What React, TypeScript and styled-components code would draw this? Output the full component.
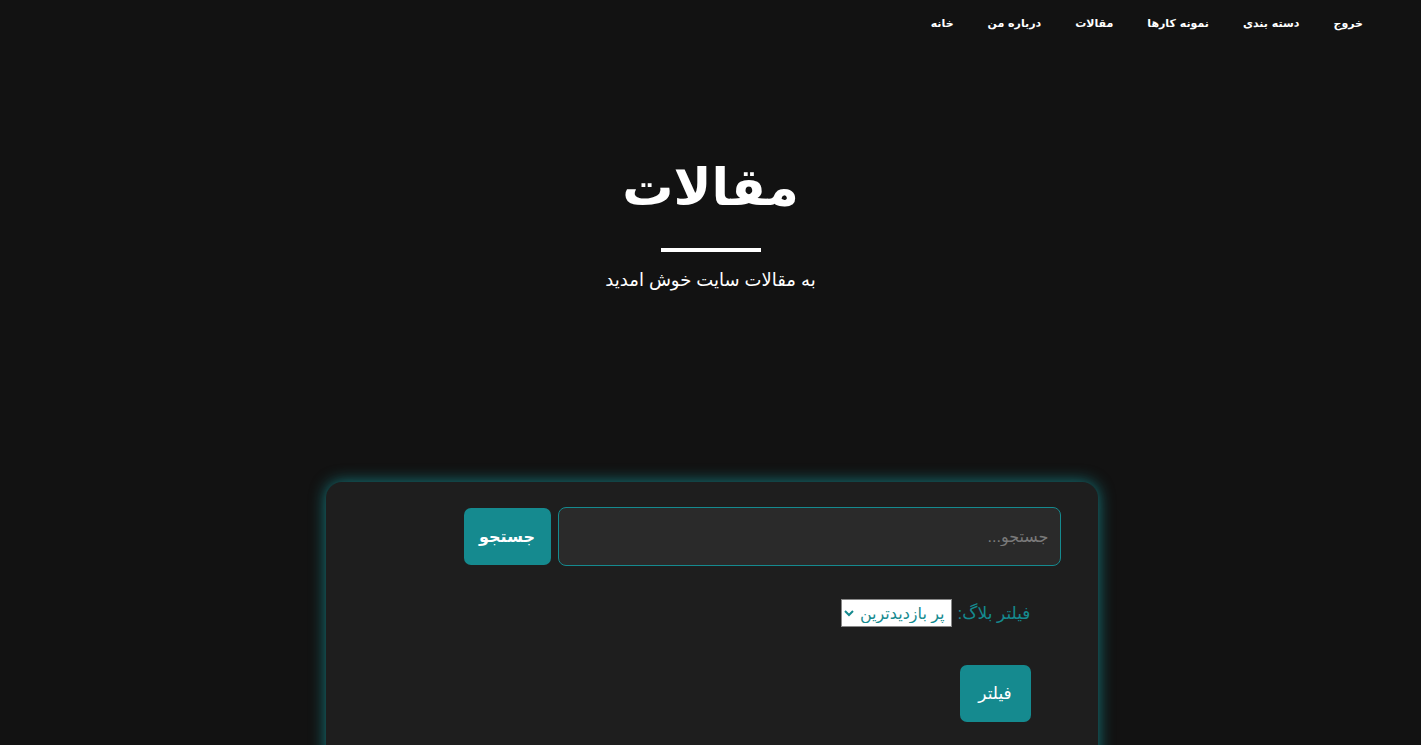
import React from 'react';
import styled, { createGlobalStyle } from 'styled-components';

const teal = '#158a8f';

const GlobalStyle = createGlobalStyle`
  html, body {
    margin: 0;
    padding: 0;
    background: #121212;
    height: 100%;
    overflow: hidden;
  }
  body {
    font-family: Arial, "Liberation Sans", "DejaVu Sans", sans-serif;
    color: #fff;
    direction: rtl;
  }
`;

const navItems = ['خروج', 'دسته بندی', 'نمونه کارها', 'مقالات', 'درباره من', 'خانه'];

export default function App() {
  return (
    <Page>
      <GlobalStyle />
      <Nav>
        {navItems.map((item) => (
          <NavLink key={item}>{item}</NavLink>
        ))}
      </Nav>
      <Hero>
        <Title>مقالات</Title>
        <Divider />
        <Subtitle>به مقالات سایت خوش امدید</Subtitle>
      </Hero>
      <Card>
        <Form>
          <SearchRow>
            <SearchInput placeholder="جستجو..." />
            <Button>جستجو</Button>
          </SearchRow>
          <FilterRow>
            <FilterLabel>فیلتر بلاگ:</FilterLabel>
            <Select defaultValue="popular">
              <option value="popular">پر بازدیدترین</option>
              <option value="newest">جدیدترین</option>
            </Select>
          </FilterRow>
          <FilterButtonRow>
            <Button small>فیلتر</Button>
          </FilterButtonRow>
        </Form>
      </Card>
    </Page>
  );
}

const Page = styled.div`
  display: flex;
  flex-direction: column;
  align-items: center;
`;

const Nav = styled.nav`
  align-self: stretch;
  display: flex;
  gap: 34px;
  padding: 8px 58px 0 0;
  height: 31px;
  box-sizing: content-box;
  align-items: center;
`;

const NavLink = styled.a`
  color: #fff;
  font-family: Tahoma, "DejaVu Sans", sans-serif;
  font-weight: bold;
  font-size: 11px;
  cursor: pointer;
`;

const Hero = styled.header`
  display: flex;
  flex-direction: column;
  align-items: center;
  padding-top: 104px;
`;

const Title = styled.h1`
  margin: 0;
  font-size: 51px;
  line-height: 90px;
  font-weight: bold;
`;

const Divider = styled.div`
  width: 100px;
  height: 4px;
  background: #fff;
  margin-top: 15px;
`;

const Subtitle = styled.p`
  margin: 16px 0 0;
  font-size: 18px;
  line-height: 24px;
`;

const Card = styled.section`
  margin-top: 190px;
  width: 772px;
  height: 300px;
  box-sizing: border-box;
  background: #1e1e1e;
  border-radius: 16px;
  box-shadow: 0 0 16px rgba(21, 160, 166, 0.75);
  padding: 25px 37px 0 0;
  margin-left: 2px;
`;

const Form = styled.div`
  width: 597px;
  display: flex;
  flex-direction: column;
`;

const SearchRow = styled.div`
  display: flex;
  align-items: center;
  gap: 7px;
`;

const SearchInput = styled.input`
  flex: 1;
  height: 59px;
  box-sizing: border-box;
  background: #2a2a2a;
  border: 1px solid ${teal};
  border-radius: 8px;
  color: #fff;
  font-family: Arial, "Liberation Sans", "DejaVu Sans", sans-serif;
  font-size: 16px;
  padding: 0 11px;
  direction: rtl;
  outline: none;
  &::placeholder {
    color: #7a7a7a;
  }
`;

const Button = styled.button<{ small?: boolean }>`
  width: ${({ small }) => (small ? '71px' : '87px')};
  height: 57px;
  background: ${teal};
  color: #fff;
  border: none;
  border-radius: 7px;
  font-family: Arial, "Liberation Sans", "DejaVu Sans", sans-serif;
  font-size: ${({ small }) => (small ? '17px' : '16px')};
  font-weight: ${({ small }) => (small ? 'normal' : 'bold')};
  cursor: pointer;
`;

const FilterRow = styled.div`
  display: flex;
  align-items: center;
  gap: 6px;
  padding-right: 30px;
  margin-top: 33px;
`;

const FilterLabel = styled.label`
  color: ${teal};
  font-size: 17px;
`;

const Select = styled.select`
  height: 28px;
  background: #fff;
  color: ${teal};
  border: 1px solid #888;
  border-radius: 0;
  font-family: Arial, "Liberation Sans", "DejaVu Sans", sans-serif;
  font-size: 16px;
  padding: 0 2px;
`;

const FilterButtonRow = styled.div`
  display: flex;
  padding-right: 30px;
  margin-top: 38px;
`;
